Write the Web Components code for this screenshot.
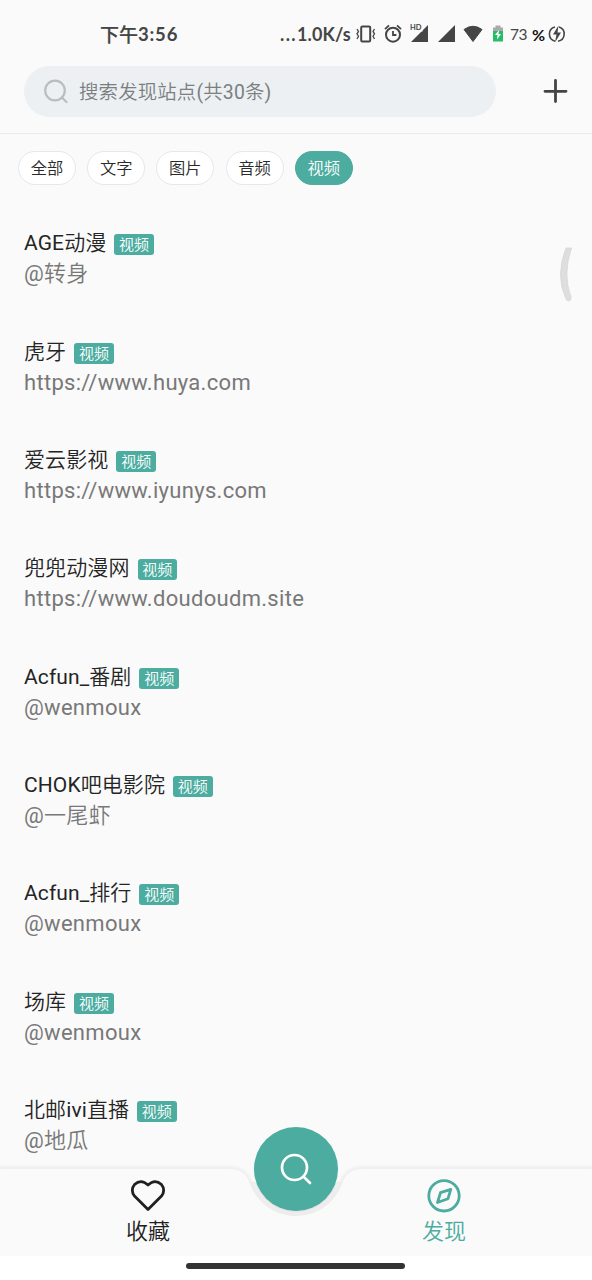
<!DOCTYPE html>
<html lang="zh-CN">
<head>
<meta charset="utf-8">
<title>发现</title>
<style>
html,body{margin:0;height:100%}
body{background:#fafafa;font-family:Roboto,"Noto Sans CJK SC DemiLight","Noto Sans CJK SC",sans-serif;color:#202020;overflow:hidden}
</style>
</head>
<body>
<source-app></source-app>
<script>
function define(name, html, init) {
  const template = document.createElement('template');
  template.innerHTML = html;
  customElements.define(name, class extends HTMLElement {
    connectedCallback() {
      if (this.shadowRoot) return;
      this.attachShadow({mode: 'open'}).append(template.content.cloneNode(true));
      if (init) init(this, this.shadowRoot);
    }
  });
}

define('status-bar', `
<style>
:host{display:flex;box-sizing:border-box;height:58px;padding:24px 26px 0 100px;color:#454545;font:600 18px/20px "Open Sans","Noto Sans CJK SC",sans-serif;white-space:nowrap}
.time{flex:none;width:180px;display:flex}
.time b{font:500 19px/20px "Noto Sans CJK SC",sans-serif;-webkit-text-stroke:.2px #454545}
.time span,.speed{font-family:Lato,sans-serif;font-weight:700;font-size:18.5px;letter-spacing:.8px}
.speed{width:75px;font-size:18px;letter-spacing:.1px}
.dots{letter-spacing:1.4px}
svg{flex:none;display:block;height:20px;overflow:visible}
.pct{width:21px;font:400 15.5px/21px Lato,sans-serif;margin-left:4px;letter-spacing:-.5px}
.sign{font:700 16px/22px Lato,sans-serif;color:#111;margin-left:1px;width:16px}
</style>
<div class="time"><b>下午</b><span>3:56</span></div>
<span class="speed"><span class="dots">...</span>1.0K/s</span>
<svg width="151" viewBox="355 24 151 20" fill="none" stroke="#454545" stroke-width="1.8">
 <rect x="361.2" y="26.5" width="9" height="15" rx="1.2" stroke-width="2"/>
 <path d="M357 29l1.5 2.4-1.5 2.4 1.5 2.4L357 39M374.5 29l-1.5 2.4 1.5 2.4-1.5 2.4 1.5 2.8" stroke-width="1.3"/>
 <circle cx="393" cy="34.7" r="7" stroke-width="2"/><path d="M393 31v4h3.4M385 29.2l4-3.8M401 29.2l-4-3.8"/>
 <path d="M428 25v17h-17zM455 25v17h-17z" fill="#454545" stroke="none"/>
 <rect x="409" y="23" width="13.5" height="8.5" fill="#fafafa" stroke="none"/>
 <path d="M464 29.5Q473 23 482 29.5L473 41.5z" fill="#454545" stroke="#454545" stroke-width="1" stroke-linejoin="round"/>
 <path d="M493 29v-1.6h2.5V25.5h5v1.9h2.5V31h-10z" fill="#aaa" stroke="none"/>
 <path d="M493 31h10v10.5h-10z" fill="#25bd66" stroke="none"/><path d="M499 30l-4 5h2.5l-.5 4.5 4-5.5h-2.5z" fill="#fff" stroke="none"/>
 <text x="410" y="30" font-family="Lato" font-size="7.5" font-weight="700" fill="#454545" stroke="none">HD</text>
</svg>
<span class="pct">73</span><span class="sign">%</span>
<svg width="18" viewBox="548 24 18 20" fill="none" stroke="#454545" stroke-width="1.6"><path d="M555 41.2A7.3 7.3 0 0 1 555 27M559 27A7.3 7.3 0 0 1 558 41.2"/><path d="M558.5 25.5l-5.5 9h3.5l-1.5 8 6-10h-3.5z" fill="#454545" stroke="none"/></svg>`);

define('search-header', `
<style>
:host{display:flex;align-items:flex-start;justify-content:space-between;box-sizing:border-box;height:76px;padding:8px 24px 0;border-bottom:1.5px solid #ebebeb}
.box{display:flex;align-items:center;width:472px;height:51px;border-radius:26px;background:#ecf0f3;box-sizing:border-box;padding:0 0 2px 18px;color:#7b7f81;font-size:19.4px;letter-spacing:.18px}
.box svg{margin:2px 10px 0 0}
.add{margin-top:12px}
</style>
<div class="box"><svg width="27" height="27" viewBox="0 0 27 27" fill="none" stroke="#b9bdbf" stroke-width="2.2" stroke-linecap="round"><circle cx="13" cy="12.5" r="9.8"/><path d="M20 19.5l4.5 4.5"/></svg><slot></slot></div>
<svg class="add" width="25" height="26" viewBox="0 0 25 26" stroke="#444" stroke-width="2.8" stroke-linecap="round"><path d="M2 13.3h21M12.5 2.5v21"/></svg>`);

define('filter-chip', `
<style>
:host{display:flex;align-items:center;justify-content:center;box-sizing:border-box;width:58px;height:34px;border:1px solid #e7e7e7;border-radius:17px;background:#fff;color:#2a2a2a;font-size:16.3px;line-height:32px;padding-top:2px}
:host([active]){background:#4bac9f;border-color:#4bac9f;color:#fff}
</style><slot></slot>`);

define('filter-row', `
<style>:host{display:flex;gap:11.2px;height:34px;padding:17px 18px 0}</style><slot></slot>`);

define('source-tag', `
<style>:host{display:block;box-sizing:border-box;width:39.5px;height:21px;border-radius:3px;background:#4bac9f;color:#fff;font-size:15px;line-height:22px;text-align:center;white-space:nowrap}</style><slot></slot>`);

define('source-item', `
<style>
:host{display:block;height:108.35px}
.title{display:flex;align-items:center;height:30px;font-size:21px;line-height:30px;color:#242424;letter-spacing:.1px}
source-tag{margin:3px 0 0 8px;letter-spacing:0}
.sub{height:30px;font-size:22px;line-height:31px;color:#787878;letter-spacing:.3px}
</style>
<div class="title"><span class="name"></span><source-tag>视频</source-tag></div>
<div class="sub"><slot></slot></div>`, (el, root) => {
  root.querySelector('.name').textContent = el.getAttribute('name');
});

define('source-list', `
<style>:host{display:block;flex:1;min-height:0;overflow:hidden;padding:43.3px 24px 0}</style><slot></slot>`);

define('nav-item', `
<style>
:host{display:flex;flex-direction:column;align-items:center;width:50%;padding-top:9px;color:#202020;font-size:22px;line-height:34px}
:host([active]){color:#4bac9f}
svg{display:block;width:36px;height:36px}
span{margin-top:2px}
</style>
<svg viewBox="0 0 36 36" fill="none" stroke="currentColor" stroke-width="2.8" stroke-linejoin="round"></svg><span><slot></slot></span>`, (el, root) => {
  root.querySelector('svg').innerHTML = el.hasAttribute('active')
    ? '<circle cx="18" cy="18.8" r="15.2"/><path d="M24.8 12.4L22 21.7l-10.5 3.8L14.5 15.7z"/>'
    : '<path d="M18 32.6L4.5 19.1A8.7 8.7 0 0 1 4.5 7.6Q11 1.5 18 8Q25 1.5 31.5 7.6A8.7 8.7 0 0 1 31.5 19.1z"/>';
});

define('bottom-nav', `
<style>
:host{display:block;position:relative;height:112px;background:#fff}
.bg{position:absolute;left:0;top:-12px;width:592px;height:100px}
.items{position:relative;display:flex;height:88px}
.fab{position:absolute;left:254px;top:-41px;width:84px;height:84px;border-radius:50%;background:#4bac9f;display:flex;align-items:center;justify-content:center;box-shadow:0 1px 2px #0001}
.home{position:absolute;left:186px;top:95px;width:219px;height:6px;border-radius:3px;background:#333}
</style>
<svg class="bg" viewBox="0 0 592 100"><defs><filter id="s" x="-5%" y="-20%" width="110%" height="140%"><feGaussianBlur stdDeviation="1.7"/></filter></defs>
<rect y="12" width="592" height="88" fill="#fafafa"/>
<path d="M250 26C257 46 274 60 296 60S335 46 342 26z" fill="#efefef"/>
<path d="M0 12H228C241 12 247 17 250 26C257 46 274 60 296 60S335 46 342 26C345 17 351 12 364 12H592V100H0z" fill="none" stroke="#ebebeb" stroke-width="3" filter="url(#s)"/>
<path d="M0 13H228C240 13 246 17 249 26C256 46 274 60 296 60S336 46 343 26C346 17 352 13 364 13H592V100H0z" fill="#fafafa"/></svg>
<div class="items"><slot></slot></div>
<div class="fab"><svg width="36" height="36" viewBox="0 0 36 36" fill="none" stroke="#fff" stroke-width="2.7" stroke-linecap="round"><circle cx="16.5" cy="16.5" r="12.5"/><path d="M26.2 26.2l5.8 5.8"/></svg></div>
<div class="home"></div>`);

define('edge-handle', `
<style>:host{position:absolute;left:558px;top:246px;width:16px;height:58px}svg{display:block}</style>
<svg width="16" height="58" viewBox="0 0 16 58" fill="none"><path d="M8 2h5.5Q4.5 28 13 51Q13.3 55 10.5 55Q8.8 55 8 53Q-3 29 8 2z" fill="#dedede" stroke="#d2d2d2" stroke-width=".7"/></svg>`);

define('source-app', `
<style>:host{display:flex;flex-direction:column;position:relative;width:592px;height:1280px;background:#fafafa;overflow:hidden}</style>
<status-bar></status-bar>
<search-header>搜索发现站点(共30条)</search-header>
<filter-row><filter-chip>全部</filter-chip><filter-chip>文字</filter-chip><filter-chip>图片</filter-chip><filter-chip>音频</filter-chip><filter-chip active>视频</filter-chip></filter-row>
<source-list>
<source-item name="AGE动漫">@转身</source-item>
<source-item name="虎牙">https://www.huya.com</source-item>
<source-item name="爱云影视">https://www.iyunys.com</source-item>
<source-item name="兜兜动漫网">https://www.doudoudm.site</source-item>
<source-item name="Acfun_番剧">@wenmoux</source-item>
<source-item name="CHOK吧电影院">@一尾虾</source-item>
<source-item name="Acfun_排行">@wenmoux</source-item>
<source-item name="场库">@wenmoux</source-item>
<source-item name="北邮ivi直播">@地瓜</source-item>
</source-list>
<bottom-nav><nav-item>收藏</nav-item><nav-item active>发现</nav-item></bottom-nav>
<edge-handle></edge-handle>`);
</script>
</body>
</html>
